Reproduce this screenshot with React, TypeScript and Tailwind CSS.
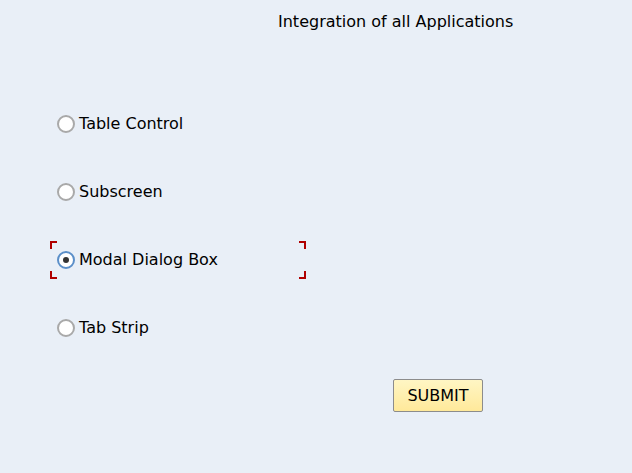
import React, { useState } from "react";

const font = { fontFamily: '"DejaVu Sans", Verdana, sans-serif' };

function Radio({ checked }: { checked: boolean }) {
  return (
    <span
      className={
        "flex h-[18px] w-[18px] shrink-0 items-center justify-center rounded-full border-2 bg-white " +
        (checked ? "border-[#5b8fc9]" : "border-[#a9a9a9]")
      }
    >
      {checked && <span className="h-[6px] w-[6px] rounded-full bg-[#333]" />}
    </span>
  );
}

export default function App() {
  const [sel, setSel] = useState(2);
  const items = ["Table Control", "Subscreen", "Modal Dialog Box", "Tab Strip"];
  return (
    <div className="h-[473px] w-[632px] bg-[#e9eff7] text-black" style={font}>
      <div className="pl-[278px] pt-[12px] text-[16px] leading-[20px]">Integration of all Applications</div>
      <div className="mt-[82px] flex flex-col gap-[48px] pl-[57px]">
        {items.map((t, i) => (
          <div key={t} className="relative flex h-[20px] items-center gap-[4px] cursor-default" onClick={() => setSel(i)}>
            <Radio checked={sel === i} />
            <span className="text-[16px] leading-[20px]">{t}</span>
            {sel === i && (
              <>
                <span className="absolute left-[-7px] top-[-9px] h-[8px] w-[7px] border-l-2 border-t-2 border-[#b00000]" />
                <span className="absolute left-[242px] top-[-9px] h-[8px] w-[7px] border-r-2 border-t-2 border-[#b00000]" />
                <span className="absolute left-[-7px] top-[21px] h-[8px] w-[7px] border-l-2 border-b-2 border-[#b00000]" />
                <span className="absolute left-[242px] top-[21px] h-[8px] w-[7px] border-r-2 border-b-2 border-[#b00000]" />
              </>
            )}
          </div>
        ))}
      </div>
      <div className="mt-[41px] pl-[393px]">
        <button className="h-[33px] w-[90px] rounded-[2px] border border-[#8c8c8c] bg-gradient-to-b from-[#fff6c4] to-[#ffe99a] text-[16px] leading-[20px]" style={font}>
          SUBMIT
        </button>
      </div>
    </div>
  );
}
